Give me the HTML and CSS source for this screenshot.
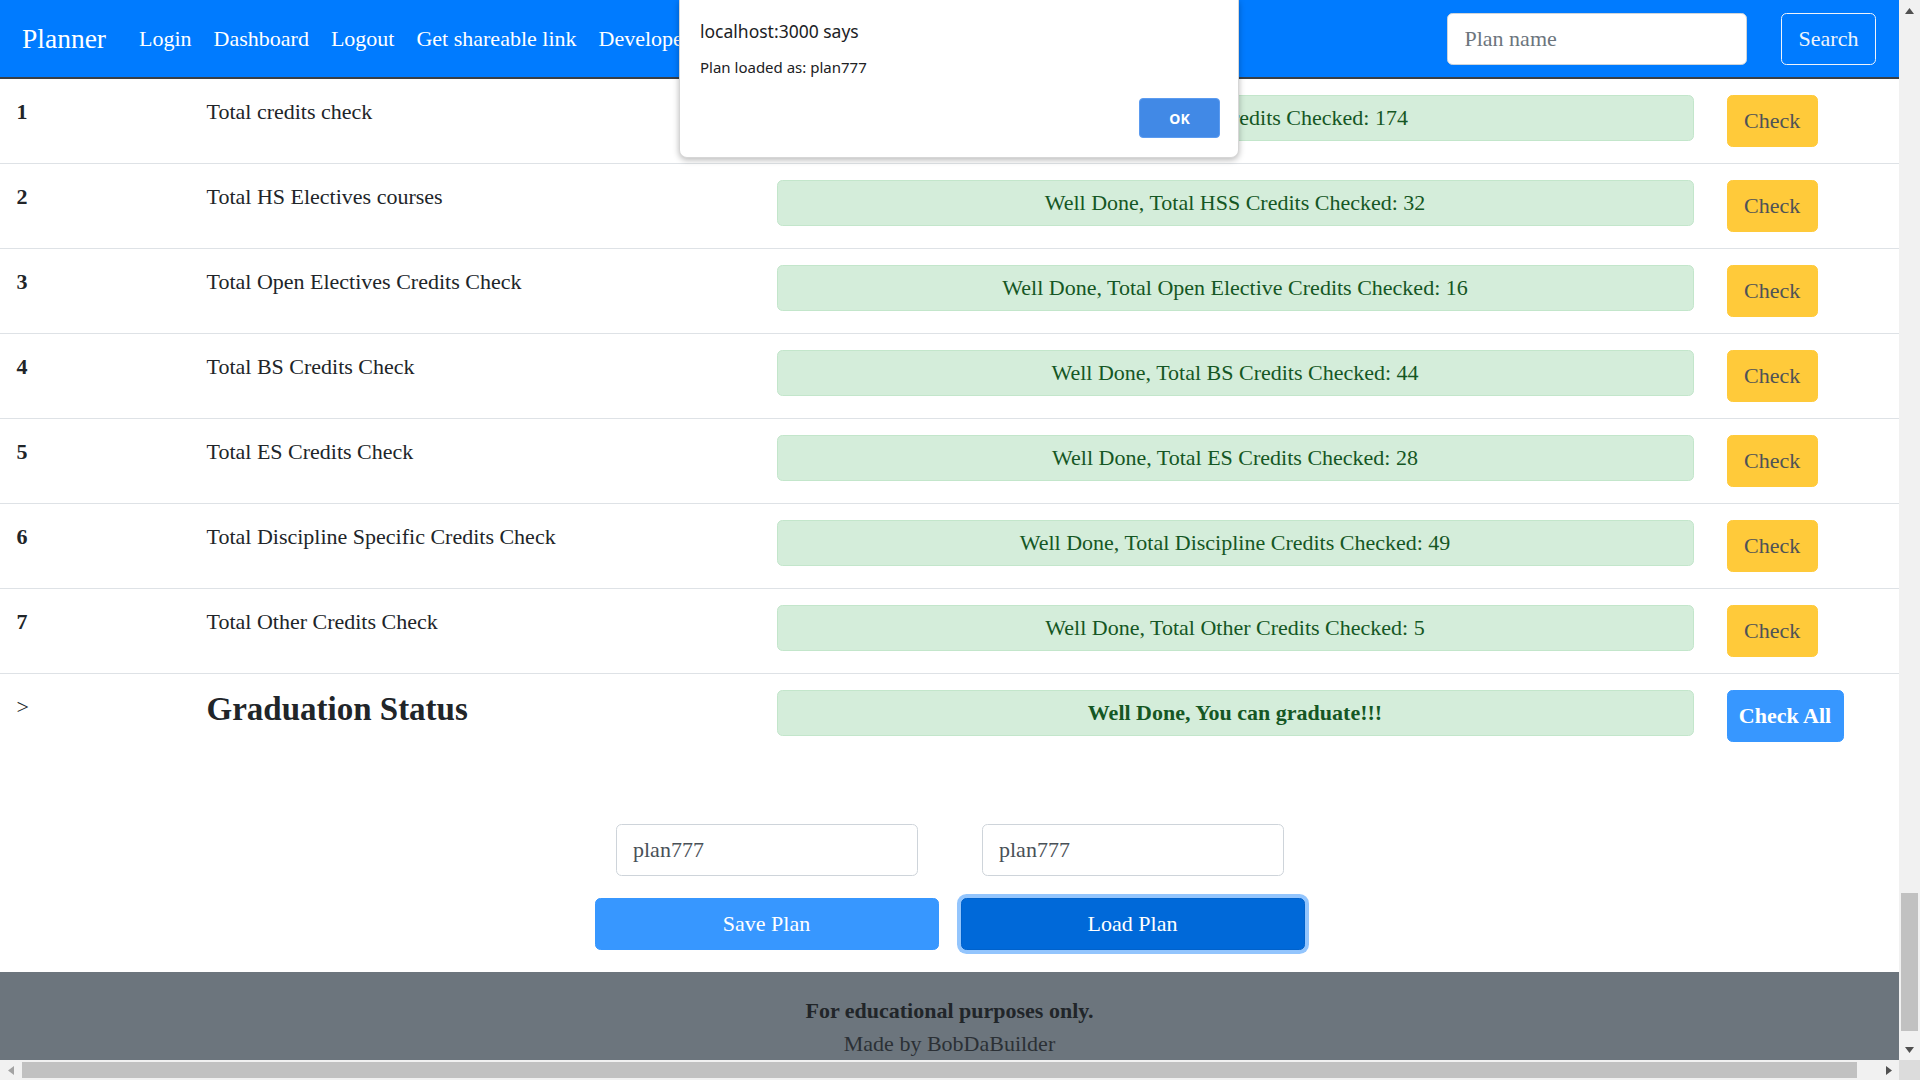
FILE: index.html
```html
<!DOCTYPE html>
<html lang="en">
<head>
<meta charset="utf-8">
<title>Planner</title>
<link rel="stylesheet" href="styles.css">
</head>
<body>
<div class="page">
  <nav class="navbar">
    <a class="brand" href="#">Planner</a>
    <ul class="nav-links">
      <li><a href="#">Login</a></li>
      <li><a href="#">Dashboard</a></li>
      <li><a href="#">Logout</a></li>
      <li><a href="#">Get shareable link</a></li>
      <li><a href="#">Developer</a></li>
    </ul>
    <form class="search">
      <input type="text" placeholder="Plan name">
      <button type="button">Search</button>
    </form>
  </nav>

  <table class="checks">
    <colgroup>
      <col class="c-num"><col class="c-label"><col class="c-status"><col class="c-action">
    </colgroup>
    <tbody>
      <tr><th>1</th><td>Total credits check</td><td><div class="status">Well Done, Total Credits Checked: 174</div></td><td><button class="btn-check">Check</button></td></tr>
      <tr><th>2</th><td>Total HS Electives courses</td><td><div class="status">Well Done, Total HSS Credits Checked: 32</div></td><td><button class="btn-check">Check</button></td></tr>
      <tr><th>3</th><td>Total Open Electives Credits Check</td><td><div class="status">Well Done, Total Open Elective Credits Checked: 16</div></td><td><button class="btn-check">Check</button></td></tr>
      <tr><th>4</th><td>Total BS Credits Check</td><td><div class="status">Well Done, Total BS Credits Checked: 44</div></td><td><button class="btn-check">Check</button></td></tr>
      <tr><th>5</th><td>Total ES Credits Check</td><td><div class="status">Well Done, Total ES Credits Checked: 28</div></td><td><button class="btn-check">Check</button></td></tr>
      <tr><th>6</th><td>Total Discipline Specific Credits Check</td><td><div class="status">Well Done, Total Discipline Credits Checked: 49</div></td><td><button class="btn-check">Check</button></td></tr>
      <tr><th>7</th><td>Total Other Credits Check</td><td><div class="status">Well Done, Total Other Credits Checked: 5</div></td><td><button class="btn-check">Check</button></td></tr>
      <tr><th class="gt">&gt;</th><td><h3 class="grad-title">Graduation Status</h3></td><td><div class="status status-bold">Well Done, You can graduate!!!</div></td><td><button class="btn-all">Check All</button></td></tr>
    </tbody>
  </table>

  <section class="plan-form">
    <input class="plan-input" type="text" value="plan777">
    <input class="plan-input" type="text" value="plan777">
    <button class="btn-plan btn-save">Save Plan</button>
    <button class="btn-plan btn-load">Load Plan</button>
  </section>

  <footer class="footer">
    <p class="foot-strong">For educational purposes only.</p>
    <p class="foot-made">Made by BobDaBuilder</p>
  </footer>
</div>

<div class="vscroll">
  <div class="arrow"><svg width="9" height="6" viewBox="0 0 9 6"><polygon points="0,6 9,6 4.5,0" fill="#505050"/></svg></div>
  <div class="vtrack"><div class="vthumb"></div></div>
  <div class="arrow"><svg width="9" height="6" viewBox="0 0 9 6"><polygon points="0,0 9,0 4.5,6" fill="#505050"/></svg></div>
</div>
<div class="hscroll">
  <div class="harrow"><svg width="6" height="9" viewBox="0 0 6 9"><polygon points="6,0 6,9 0,4.5" fill="#a3a3a3"/></svg></div>
  <div class="htrack"><div class="hthumb"></div></div>
  <div class="harrow"><svg width="6" height="9" viewBox="0 0 6 9"><polygon points="0,0 0,9 6,4.5" fill="#505050"/></svg></div>
</div>
<div class="corner"></div>

<div class="js-alert" role="alertdialog">
  <div class="dlg-title">localhost:3000 says</div>
  <div class="dlg-body">Plan loaded as: plan777</div>
  <div class="dlg-actions"><button class="dlg-ok">OK</button></div>
</div>
</body>
</html>
```
FILE: styles.css
```css
html, body {
  margin: 0;
  padding: 0;
}
body {
  width: 1920px;
  height: 1080px;
  overflow: hidden;
  display: grid;
  grid-template-columns: 1899px 21px;
  grid-template-rows: 1060px 20px;
  font-family: "Liberation Serif", "Times New Roman", serif;
  font-size: 22px;
  line-height: 1.5;
  color: #212529;
  background: #fff;
  position: relative;
}
button, input {
  font-family: inherit;
  font-size: 22px;
}

.page {
  grid-column: 1;
  grid-row: 1;
  overflow: hidden;
  display: flex;
  flex-direction: column;
}

/* Navbar */
.navbar {
  display: flex;
  align-items: center;
  height: 77px;
  padding: 0 23px 0 22px;
  background: #007bff;
  border-bottom: 2px solid #3a3f44;
  flex-shrink: 0;
}
.brand {
  font-size: 27.5px;
  line-height: 41px;
  color: #fff;
  text-decoration: none;
  margin-right: 22px;
}
.nav-links {
  display: flex;
  list-style: none;
  margin: 0;
  padding: 0;
}
.nav-links a {
  display: block;
  padding: 0 11px;
  line-height: 33px;
  color: #fff;
  text-decoration: none;
}
.search {
  margin: 0 0 0 auto;
  display: flex;
  gap: 34px;
}
.search input {
  box-sizing: border-box;
  width: 300px;
  height: 52px;
  border: 1px solid #ced4da;
  border-radius: 5.5px;
  padding: 0 16.5px;
  color: #495057;
  background: #fff;
}
.search input::placeholder {
  color: #6c757d;
}
.search button {
  box-sizing: border-box;
  width: 95px;
  height: 52px;
  background: transparent;
  border: 1px solid #eef3fb;
  border-radius: 5.5px;
  color: #eef3fb;
  padding: 0;
}

/* Table */
.checks {
  width: 100%;
  border-collapse: collapse;
  table-layout: fixed;
  flex-shrink: 0;
}
.c-num { width: 190px; }
.c-label { width: 570px; }
.c-status { width: 950px; }
.checks th,
.checks td {
  padding: 16px 16.5px;
  vertical-align: top;
  text-align: left;
  border-top: 1px solid #dee2e6;
  line-height: 33px;
}
.checks tr:first-child th,
.checks tr:first-child td {
  border-top: none;
}
.checks th {
  font-weight: bold;
}
.checks th.gt {
  font-weight: normal;
}
.status {
  background: #d4edda;
  border: 1px solid #c3e6cb;
  color: #155724;
  border-radius: 5.5px;
  padding: 4.5px 10px 6.5px;
  line-height: 33px;
  text-align: center;
}
.status-bold {
  font-weight: bold;
}
.btn-check {
  box-sizing: border-box;
  height: 52px;
  padding: 0 16.5px;
  background: #ffca3a;
  border: 1px solid #ffca3a;
  border-radius: 5.5px;
  color: #4f5257;
  line-height: 50px;
}
.btn-all {
  box-sizing: border-box;
  height: 52px;
  width: 117px;
  padding: 0;
  background: #3797ff;
  border: 1px solid #3797ff;
  border-radius: 5.5px;
  color: #fff;
  font-weight: bold;
}
.grad-title {
  margin: 0;
  font-size: 33px;
  font-weight: bold;
  line-height: 38px;
}

/* Plan form */
.plan-form {
  margin-top: 66px;
  display: grid;
  grid-template-columns: 344px 344px;
  column-gap: 22px;
  row-gap: 22px;
  justify-content: center;
  justify-items: center;
  flex-shrink: 0;
}
.plan-input {
  box-sizing: border-box;
  width: 302px;
  height: 52px;
  border: 1px solid #ced4da;
  border-radius: 5.5px;
  padding: 0 16.5px;
  color: #495057;
  background: #fff;
}
.btn-plan {
  box-sizing: border-box;
  width: 344px;
  height: 52px;
  border-radius: 5.5px;
  color: #fff;
  padding: 0;
}
.btn-save {
  background: #3797ff;
  border: 1px solid #3797ff;
}
.btn-load {
  background: #0069d9;
  border: 1px solid #0062cc;
  box-shadow: 0 0 0 4px #93c5fd;
}

/* Footer */
.footer {
  margin-top: 22px;
  flex: 1;
  background: #6c757d;
  padding-top: 22px;
  text-align: center;
}
.footer p {
  margin: 0;
  line-height: 33px;
}
.foot-strong {
  font-weight: bold;
  color: #212529;
}
.foot-made {
  color: #2b3035;
}

/* Scrollbars */
.vscroll {
  grid-column: 2;
  grid-row: 1;
  background: #f1f1f1;
  display: flex;
  flex-direction: column;
}
.arrow {
  height: 21px;
  display: flex;
  align-items: center;
  justify-content: center;
}
.vtrack {
  flex: 1;
}
.vthumb {
  margin: 872px 2px 0 2px;
  height: 138px;
  background: #c1c1c1;
}
.hscroll {
  grid-column: 1;
  grid-row: 2;
  background: #f1f1f1;
  display: flex;
  align-items: center;
}
.harrow {
  width: 21px;
  height: 20px;
  display: flex;
  align-items: center;
  justify-content: center;
}
.htrack {
  flex: 1;
  height: 20px;
  display: flex;
  align-items: center;
}
.hthumb {
  margin-left: 1px;
  width: 1835px;
  height: 16px;
  background: #c1c1c1;
}
.corner {
  grid-column: 2;
  grid-row: 2;
  background: #dcdcdc;
}

/* Browser alert dialog */
.js-alert {
  position: absolute;
  left: 679px;
  top: 0;
  width: 560px;
  height: 158px;
  box-sizing: border-box;
  padding: 19px 18px 19px 20px;
  background: #fff;
  border: 1px solid #d6d6d6;
  border-top: none;
  border-radius: 0 0 8px 8px;
  box-shadow: 0 2px 6px rgba(0, 0, 0, 0.28);
  font-family: "Noto Sans", "Open Sans", sans-serif;
  color: #202124;
  display: flex;
  flex-direction: column;
}
.dlg-title {
  font-size: 17.5px;
  line-height: 24px;
}
.dlg-body {
  margin-top: 14px;
  font-size: 15px;
  line-height: 20px;
}
.dlg-actions {
  margin-top: auto;
  display: flex;
  justify-content: flex-end;
}
.dlg-ok {
  width: 81px;
  height: 40px;
  border: 1px solid #5b9bf0;
  border-radius: 4px;
  background: #4189e6;
  color: #fff;
  font-family: "Noto Sans", "Open Sans", sans-serif;
  font-size: 14px;
  font-weight: bold;
  padding: 0;
}
```
